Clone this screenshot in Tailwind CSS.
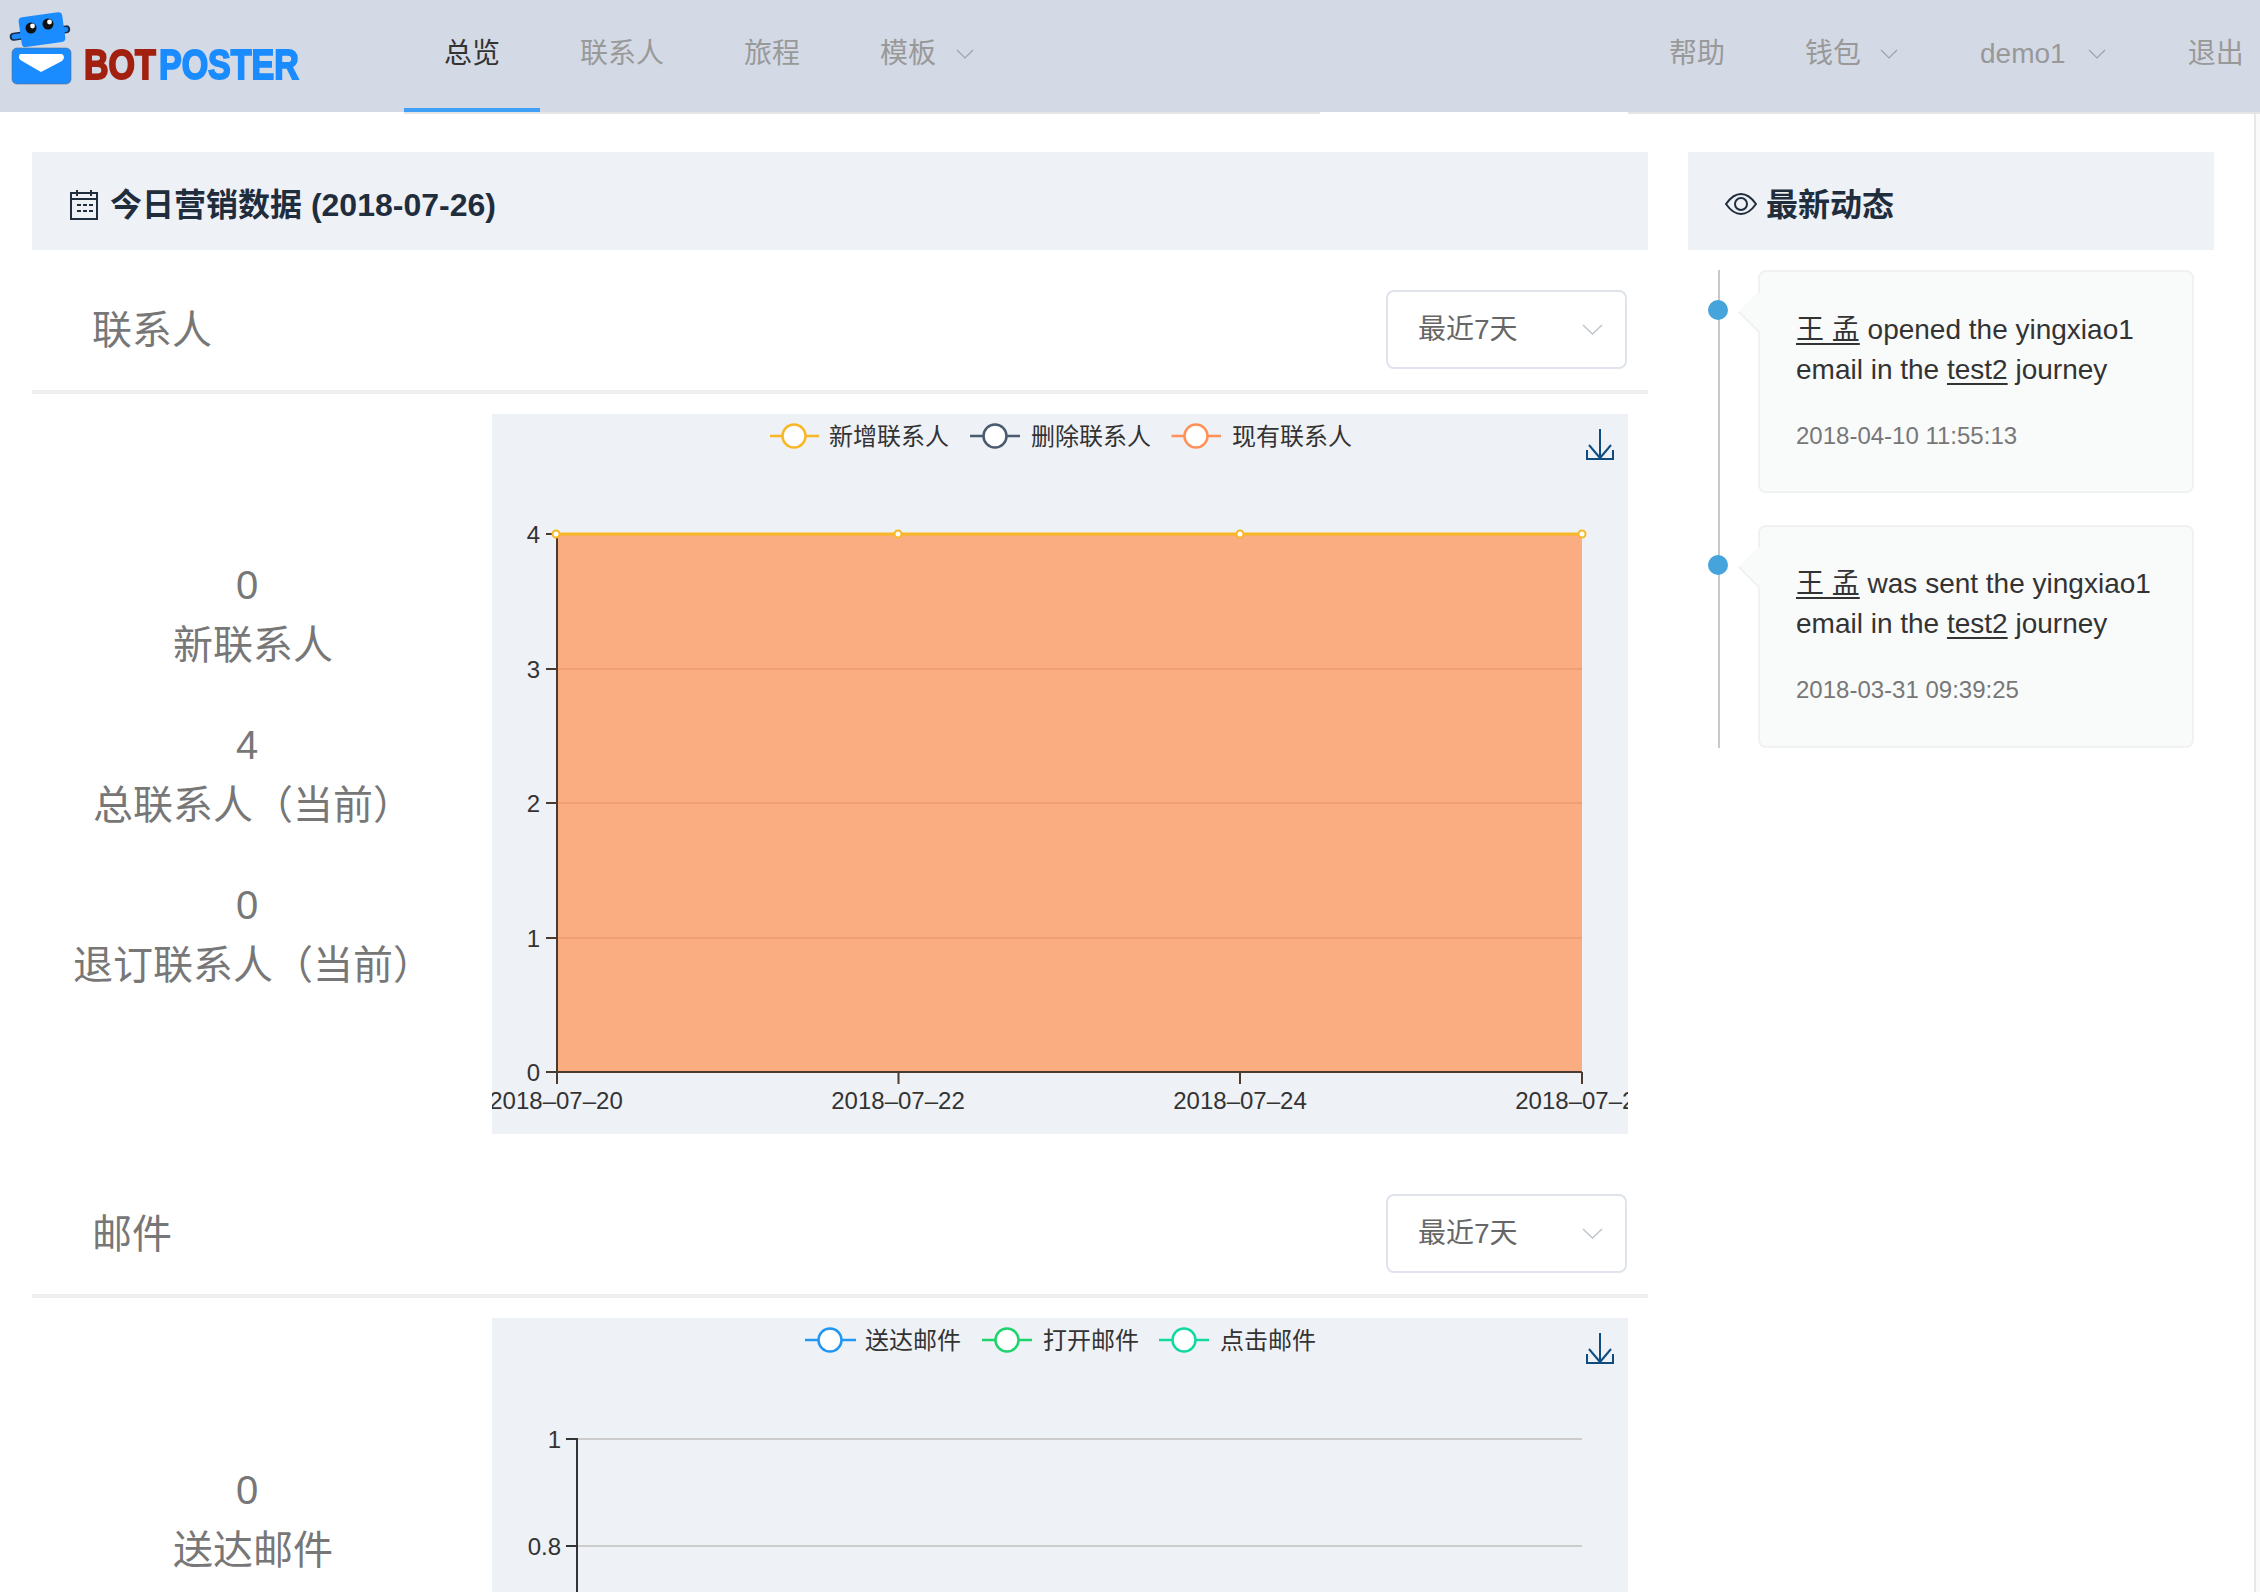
<!DOCTYPE html>
<html lang="zh">
<head>
<meta charset="utf-8">
<script src="https://cdn.jsdelivr.net/npm/@tailwindcss/browser@4"></script>
<title>Botposter</title>
</head>
<body class="bg-white font-['Liberation_Sans','Noto_Sans_CJK_SC',sans-serif] text-[#333]">
<div class="relative h-[1592px] w-[2260px] overflow-hidden">

  <!-- header -->
  <header class="flex h-[114px] w-[2300px] bg-white">
    <div class="flex h-[112px] w-[404px] shrink-0 bg-[#d3dae6]">
      <svg class="h-[112px] w-[320px] blur-[0.5px]" viewBox="0 0 320 112">
        <g transform="rotate(-8 40 30)">
          <rect x="9" y="29" width="61" height="8" rx="4" fill="#1b2f4a"/>
          <rect x="11" y="30.500" width="57" height="5" rx="2.500" fill="#1a8cff"/>
          <rect x="20" y="15" width="44" height="30" rx="4" fill="#1a8cff"/>
        </g>
        <circle cx="31" cy="28" r="5.500" fill="#111"/><circle cx="48" cy="24" r="5.500" fill="#111"/>
        <circle cx="32.500" cy="26" r="2.400" fill="#fff"/><circle cx="49.500" cy="22" r="2.400" fill="#fff"/>
        <rect x="12" y="48" width="59" height="36" rx="5" fill="#1a8cff" stroke="#5a6b80" stroke-width="0.600"/>
        <path d="M20 54 Q17 58 22 61 L41 72 L62 61 Q66 57 62 54 Z" fill="#fff"/>
        <g font-size="34" font-weight="700" transform="scale(1 1.230)" stroke-width="1.600">
          <text x="84" y="64.500" fill="#a2200f" stroke="#a2200f">BOT</text>
          <text x="159" y="64.500" fill="#1a8cff" stroke="#1a8cff">POSTER</text>
        </g>
      </svg>
    </div>
    <nav class="flex h-[114px] w-[916px] shrink-0 border-b-2 border-[#e5e5e5] bg-[#d3dae6] text-[28px] text-[#999]">
      <a class="flex h-[112px] items-center border-b-4 border-[#3fa0f5] px-10 text-[#333]">总览</a>
      <a class="flex h-[112px] items-center border-b-4 border-transparent px-10">联系人</a>
      <a class="flex h-[112px] items-center border-b-4 border-transparent px-10">旅程</a>
      <a class="flex h-[112px] items-center gap-5 border-b-4 border-transparent px-10">模板
        <svg class="h-[10px] w-[18px]" viewBox="0 0 18 10" fill="none" stroke="#9aa3ae" stroke-width="1.200"><path d="M1 1 L9 9 L17 1"/></svg>
      </a>
    </nav>
    <div class="h-[112px] w-[308px] shrink-0 bg-[#d3dae6]"></div>
    <nav class="flex h-[114px] shrink-0 grow border-b-2 border-[#e5e5e5] bg-[#d3dae6] pl-px text-[28px] text-[#999]">
      <a class="flex h-[112px] items-center border-b-4 border-transparent px-10">帮助</a>
      <a class="flex h-[112px] items-center gap-[19px] border-b-4 border-transparent pl-10 pr-[42px]">钱包
        <svg class="h-[10px] w-[18px]" viewBox="0 0 18 10" fill="none" stroke="#9aa3ae" stroke-width="1.200"><path d="M1 1 L9 9 L17 1"/></svg>
      </a>
      <a class="flex h-[112px] items-center gap-[22px] border-b-4 border-transparent pl-10 pr-[42px]">demo1
        <svg class="h-[10px] w-[18px]" viewBox="0 0 18 10" fill="none" stroke="#9aa3ae" stroke-width="1.200"><path d="M1 1 L9 9 L17 1"/></svg>
      </a>
      <a class="flex h-[112px] items-center border-b-4 border-transparent px-10">退出</a>
    </nav>
  </header>

  <main class="flex gap-10 pl-8 pt-[38px]">
    <!-- left column -->
    <section class="w-[1616px] shrink-0">
      <div class="flex h-[98px] items-center bg-[#eef1f6] pl-[38px] text-[32px] font-bold text-[#1f2d3d]">
        <svg class="mr-3 mt-2 h-[30px] w-[28px]" viewBox="0 0 28 30" fill="none" stroke="#1f2d3d" stroke-width="2">
          <rect x="1" y="3" width="26" height="26"/><path d="M1 9 H27 M7 0 V6 M21 0 V6"/>
          <path d="M7 15 H24 M7 21 H24" stroke-dasharray="4 2" stroke-width="2"/>
        </svg>
        <span class="pt-[7px]">今日营销数据 (2018-07-26)</span>
      </div>

      <!-- 联系人 -->
      <div class="flex items-center justify-between border-b-4 border-[#eeeeee] pb-[21px] pl-[60px] pr-[21px] pt-10">
        <h2 class="pt-px text-[40px] font-normal text-[#777]">联系人</h2>
        <div class="flex h-[79px] w-[241px] items-center justify-between rounded-lg border-2 border-[#dfe3eb] bg-white pl-[30px] pr-[22px] text-[28px] text-[#666]">
          <span class="pt-px">最近7天</span>
          <svg class="h-[11px] w-[21px]" viewBox="0 0 21 11" fill="none" stroke="#bfc6d0" stroke-width="1.500"><path d="M1 1 L10.500 10 L20 1"/></svg>
        </div>
      </div>
      <div class="mt-5 flex items-center">
        <div class="flex w-[442px] flex-col gap-10 pt-px text-center text-[40px] leading-[60px] text-[#777]">
          <div><div class="pr-3">0</div><div>新联系人</div></div>
          <div><div class="pr-3">4</div><div>总联系人（当前）</div></div>
          <div><div class="pr-3">0</div><div>退订联系人（当前）</div></div>
        </div>
        <svg class="ml-[18px] h-[720px] w-[1136px] bg-[#eef1f6] text-[24px]" viewBox="0 0 1136 720">
          <!-- legend -->
          <g fill="#333">
            <text x="337" y="31">新增联系人</text>
            <text x="539" y="31">删除联系人</text>
            <text x="740" y="31">现有联系人</text>
          </g>
          <g fill="#fff" stroke-width="2.500">
            <g stroke="#f8b825"><path d="M278 22 H327"/><circle cx="302" cy="22" r="11.500"/></g>
            <g stroke="#4a5b70"><path d="M478 22 H528"/><circle cx="503" cy="22" r="11.500"/></g>
            <g stroke="#ff9157"><path d="M679.500 22 H729"/><circle cx="704" cy="22" r="11.500"/></g>
          </g>
          <path d="M1108 15 V44 M1108 44 L1097 31 M1108 44 L1119 31 M1095 36 V45 H1121 V36" fill="none" stroke="#0f4c81" stroke-width="2"/>
          <!-- area -->
          <rect x="64" y="120" width="1026" height="538" fill="#fbad82"/>
          <path d="M64 255 H1090 M64 389 H1090 M64 524 H1090" stroke="#ef9f72" stroke-width="2"/>
          <path d="M64 120 H1090" stroke="#f8b825" stroke-width="3"/>
          <path d="M54 120 H64 M54 255 H64 M54 389 H64 M54 524 H64 M54 658 H64 M65 120 V658 H1090 M65 658 V670 M406.500 658 V670 M748 658 V670 M1090 658 V670" fill="none" stroke="#4a3a30" stroke-width="2"/>
          <g fill="#fff" stroke="#f8b825" stroke-width="2">
            <circle cx="64" cy="120" r="3.500"/><circle cx="406" cy="120" r="3.500"/><circle cx="748" cy="120" r="3.500"/><circle cx="1090" cy="120" r="3.500"/>
          </g>
          <g fill="#333" text-anchor="end">
            <text x="48" y="129">4</text>
            <text x="48" y="264">3</text>
            <text x="48" y="398">2</text>
            <text x="48" y="533">1</text>
            <text x="48" y="667">0</text>
          </g>
          <g fill="#333" text-anchor="middle">
            <text x="64" y="695">2018–07–20</text>
            <text x="406" y="695">2018–07–22</text>
            <text x="748" y="695">2018–07–24</text>
            <text x="1090" y="695">2018–07–26</text>
          </g>
        </svg>
      </div>

      <!-- 邮件 -->
      <div class="mt-[60px] flex items-center justify-between border-b-4 border-[#eeeeee] pb-[21px] pl-[60px] pr-[21px]">
        <h2 class="pt-px text-[40px] font-normal text-[#777]">邮件</h2>
        <div class="flex h-[79px] w-[241px] items-center justify-between rounded-lg border-2 border-[#dfe3eb] bg-white pl-[30px] pr-[22px] text-[28px] text-[#666]">
          <span class="pt-px">最近7天</span>
          <svg class="h-[11px] w-[21px]" viewBox="0 0 21 11" fill="none" stroke="#bfc6d0" stroke-width="1.500"><path d="M1 1 L10.500 10 L20 1"/></svg>
        </div>
      </div>
      <div class="mt-5 flex items-start">
        <div class="flex w-[442px] flex-col gap-10 pt-[142px] text-center text-[40px] leading-[60px] text-[#777]">
          <div><div class="pr-3">0</div><div>送达邮件</div></div>
        </div>
        <svg class="ml-[18px] h-[720px] w-[1136px] bg-[#eef1f6] text-[24px]" viewBox="0 0 1136 720">
          <g fill="#333">
            <text x="373" y="31">送达邮件</text>
            <text x="551" y="31">打开邮件</text>
            <text x="728" y="31">点击邮件</text>
          </g>
          <g fill="#fff" stroke-width="2.500">
            <g stroke="#2196f3"><path d="M313 22 H364"/><circle cx="338" cy="22" r="11.500"/></g>
            <g stroke="#1fd46d"><path d="M490 22 H540"/><circle cx="515" cy="22" r="11.500"/></g>
            <g stroke="#12d9a0"><path d="M667 22 H717"/><circle cx="692" cy="22" r="11.500"/></g>
          </g>
          <path d="M1108 15 V44 M1108 44 L1097 31 M1108 44 L1119 31 M1095 36 V45 H1121 V36" fill="none" stroke="#0f4c81" stroke-width="2"/>
          <path d="M85 121 H1090 M85 228 H1090" stroke="#cccccc" stroke-width="2"/>
          <path d="M74 121 H85 M74 228 H85 M85 120 V720" fill="none" stroke="#333" stroke-width="2"/>
          <g fill="#333" text-anchor="end">
            <text x="69" y="130">1</text>
            <text x="69" y="237">0.8</text>
          </g>
        </svg>
      </div>
    </section>

    <!-- right column -->
    <aside class="w-[526px] shrink-0">
      <div class="flex h-[98px] items-center bg-[#eef1f6] pl-[37px] text-[32px] font-bold text-[#1f2d3d]">
        <svg class="mr-[9px] mt-[6px] h-[24px] w-[32px]" viewBox="0 0 32 24" fill="none" stroke="#1f2d3d" stroke-width="2">
          <path d="M1 12 Q8 2 16 2 Q24 2 31 12 Q24 22 16 22 Q8 22 1 12 Z"/><circle cx="16" cy="12" r="6"/>
        </svg>
        <span class="pt-[7px]">最新动态</span>
      </div>
      <div class="relative mt-5 flex flex-col gap-8 pl-[70px]">
        <div class="absolute bottom-0 left-[30px] top-0 w-[2px] bg-[#c9c9c9]"></div>

        <article class="relative h-[223px] w-[436px] rounded-lg border-2 border-[#f0f1f2] bg-[#f9fafa] pl-[36px] pt-[38px] text-[28px] leading-10 text-[#333]">
          <span class="absolute left-[-52px] top-[28px] h-5 w-5 rounded-full bg-[#46a4dd]"></span>
          <span class="absolute left-[-16px] top-[26px] h-[29px] w-[29px] rotate-45 border-b-2 border-[#f0f1f2] bg-[#f9fafa]"></span>
          <p class="relative"><span class="underline underline-offset-4">王 孟</span> opened the yingxiao1<br>email in the <span class="underline underline-offset-4">test2</span> journey</p>
          <p class="relative mt-[26px] text-2xl leading-10 text-[#777]">2018-04-10 11:55:13</p>
        </article>

        <article class="relative h-[223px] w-[436px] rounded-lg border-2 border-[#f0f1f2] bg-[#f9fafa] pl-[36px] pt-[37px] text-[28px] leading-10 text-[#333]">
          <span class="absolute left-[-52px] top-[28px] h-5 w-5 rounded-full bg-[#46a4dd]"></span>
          <span class="absolute left-[-16px] top-[26px] h-[29px] w-[29px] rotate-45 border-b-2 border-[#f0f1f2] bg-[#f9fafa]"></span>
          <p class="relative"><span class="underline underline-offset-4">王 孟</span> was sent the yingxiao1<br>email in the <span class="underline underline-offset-4">test2</span> journey</p>
          <p class="relative mt-[26px] text-2xl leading-10 text-[#777]">2018-03-31 09:39:25</p>
        </article>
      </div>
    </aside>
  </main>

  <!-- page scrollbar track -->
  <div class="absolute bottom-0 right-0 top-[114px] w-[6px] border-l-2 border-[#e8e8e8] bg-[#fafafa]"></div>
</div>
</body>
</html>
